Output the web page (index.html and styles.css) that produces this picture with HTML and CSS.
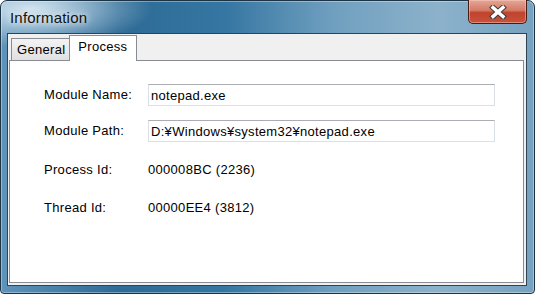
FILE: index.html
```html
<!DOCTYPE html>
<html lang="en">
<head>
    <meta charset="UTF-8">
    <title>Information</title>
    <link rel="stylesheet" href="styles.css">
</head>
<body>
    <div class="window">
        <div class="titlebar">
            <span class="title">Information</span>
            <button class="close" aria-label="Close">
                <svg width="18" height="14" viewBox="0 0 18 14">
                    <path d="M4 2.5 L14 11.5 M14 2.5 L4 11.5" stroke="#3a3a3a" stroke-width="5.5" stroke-linecap="square"/>
                    <path d="M4 2.5 L14 11.5 M14 2.5 L4 11.5" stroke="#ffffff" stroke-width="3.5" stroke-linecap="square"/>
                </svg>
            </button>
        </div>

        <div class="client">
            <div class="tabs">
                <div class="tab">General</div>
                <div class="tab active">Process</div>
            </div>

            <div class="panel">
                <div class="fields">
                    <label class="label">Module Name:</label>
                    <input class="field" type="text" value="notepad.exe">

                    <label class="label">Module Path:</label>
                    <input class="field" type="text" value="D:¥Windows¥system32¥notepad.exe">

                    <span class="label">Process Id:</span>
                    <span class="value">000008BC (2236)</span>

                    <span class="label">Thread Id:</span>
                    <span class="value">00000EE4 (3812)</span>
                </div>
            </div>
        </div>
    </div>
</body>
</html>
```

FILE: styles.css
```css
body {
    margin: 0;
    background-color: #ffffff;
    font-family: 'Liberation Sans', Arial, sans-serif;
    font-size: 13px;
    letter-spacing: 0.3px;
    color: #000000;
}
.window {
    width: 535px;
    height: 294px;
    box-sizing: border-box;
    display: flex;
    flex-direction: column;
    padding: 0 7px 7px 6px;
    border: 1px solid #1d3447;
    border-radius: 7px 7px 4px 4px;
    background:
        radial-gradient(ellipse 120px 38px at 30px 8px, rgba(225, 238, 246, 0.9), rgba(225, 238, 246, 0)),
        linear-gradient(to right, #5f94ba 0%, #2e6b96 22%, #3576a2 42%, #6f9fbf 62%, #8cb2cb 82%, #76a2c0 100%);
    box-shadow: inset 0 0 0 1px rgba(255, 255, 255, 0.35);
}
.titlebar {
    height: 32px;
    display: flex;
    justify-content: space-between;
    align-items: flex-start;
}
.title {
    padding: 8px 0 0 3px;
    font-size: 15px;
    line-height: 17px;
    letter-spacing: 0.2px;
    color: #111111;
    text-shadow: 0 0 6px rgba(255, 255, 255, 0.9), 0 0 10px rgba(255, 255, 255, 0.6);
}
.close {
    width: 59px;
    height: 24px;
    margin-top: -1px;
    padding: 0;
    display: flex;
    align-items: center;
    justify-content: center;
    border: 1px solid #4a1a14;
    border-top: none;
    border-radius: 0 0 5px 5px;
    background: linear-gradient(#e3a797 0%, #d47a66 45%, #c0432d 55%, #c8523c 100%);
    box-shadow: inset 0 0 0 1px rgba(255, 210, 200, 0.45);
}
.client {
    flex: 1;
    display: flex;
    flex-direction: column;
    padding: 1px 2px 2px 1px;
    background-color: #f0f0f0;
    border: 1px solid #2c4456;
}
.tabs {
    display: flex;
    align-items: flex-end;
    padding-left: 2px;
}
.tab {
    height: 21px;
    padding: 0 4px 0 5px;
    line-height: 22px;
    border: 1px solid #898c95;
    border-bottom: none;
    background: linear-gradient(#f3f3f3, #e0e0e0);
}
.tab.active {
    position: relative;
    z-index: 1;
    height: 25px;
    line-height: 22px;
    margin: 0 0 -1px -1px;
    padding: 0 9px 0 8px;
    background: #ffffff;
}
.panel {
    flex: 1;
    background-color: #ffffff;
    border: 1px solid #898c95;
}
.fields {
    display: grid;
    grid-template-columns: 104px 347px;
    grid-template-rows: 36px 39px 38px 22px;
    align-items: start;
    padding: 23px 0 0 34px;
}
.label,
.value {
    line-height: 22px;
}
.field {
    box-sizing: border-box;
    height: 22px;
    margin: 0;
    padding: 0 2px;
    font-family: 'Liberation Sans', Arial, sans-serif;
    font-size: 13px;
    letter-spacing: 0.3px;
    color: #000000;
    border: 1px solid #dbdfe6;
    border-top-color: #abadb3;
    background-color: #ffffff;
    outline: none;
}
```
